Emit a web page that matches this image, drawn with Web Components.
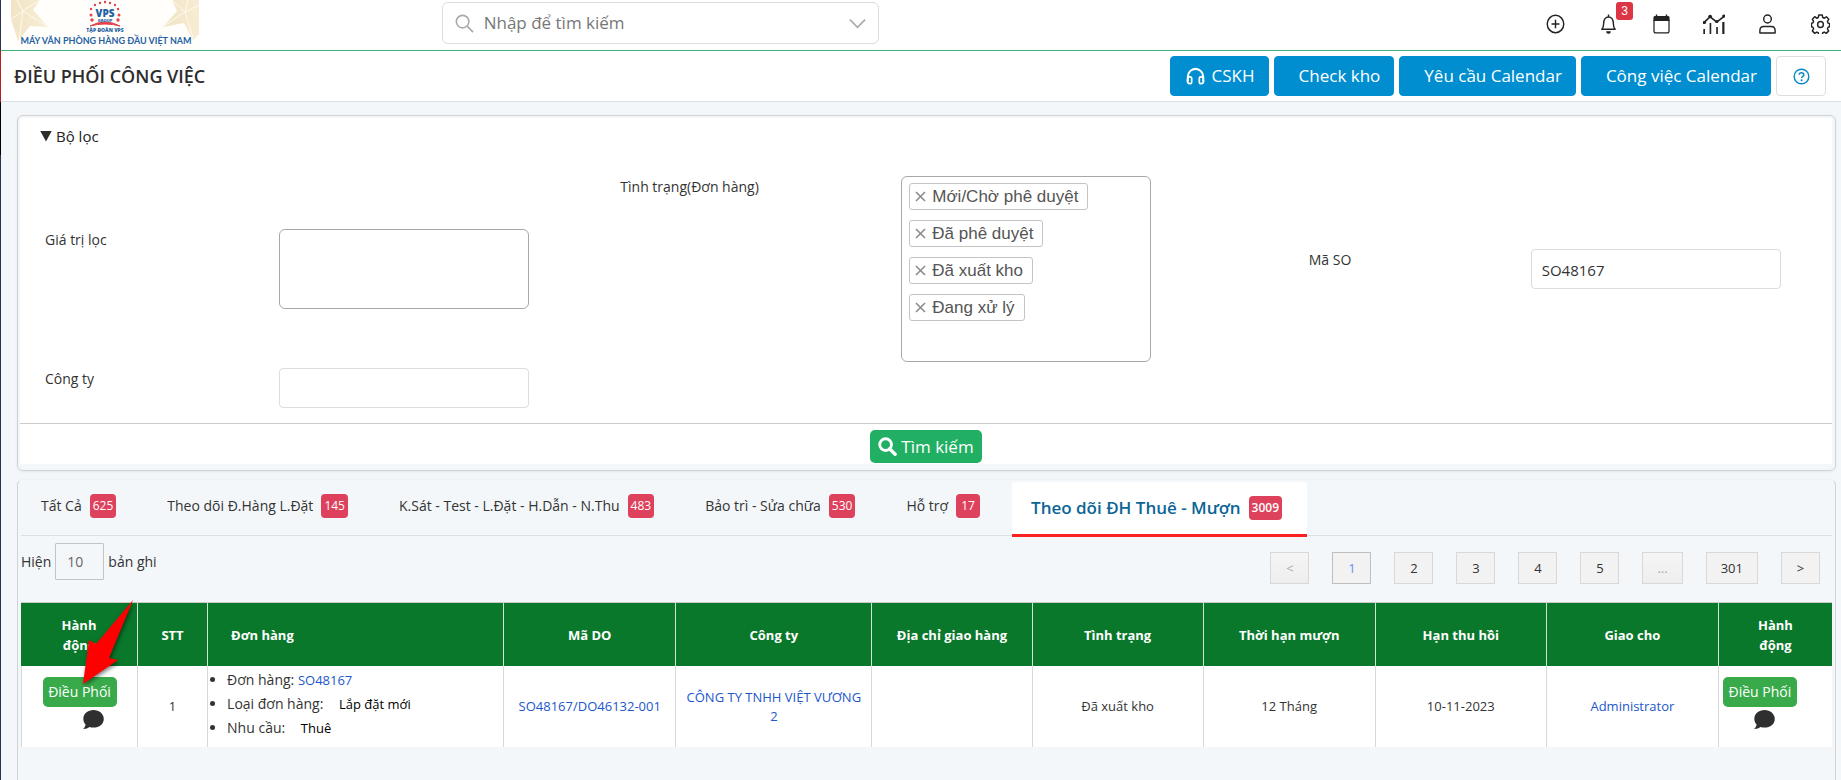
<!DOCTYPE html>
<html lang="vi">
<head>
<meta charset="utf-8">
<title>Điều phối công việc</title>
<style>
  html, body { margin: 0; }
  body { font-family: "Open Sans", "Noto Sans", sans-serif; font-size: 14px; line-height: 20px; color: #333; background: #f4f7fa; }
</style>
</head>
<body>
<app-shell>
  <top-bar slot="top"></top-bar>
  <page-title slot="title" heading="ĐIỀU PHỐI CÔNG VIỆC">
    <action-button icon="headphones">CSKH</action-button>
    <action-button>Check kho</action-button>
    <action-button>Yêu cầu Calendar</action-button>
    <action-button>Công việc Calendar</action-button>
    <action-button icon="help" plain label="Trợ giúp"></action-button>
  </page-title>
  <filter-panel></filter-panel>
  <result-panel>
    <tab-strip slot="tabs">
      <tab-item count="625">Tất Cả</tab-item>
      <tab-item count="145">Theo dõi Đ.Hàng L.Đặt</tab-item>
      <tab-item count="483">K.Sát - Test - L.Đặt - H.Dẫn - N.Thu</tab-item>
      <tab-item count="530">Bảo trì - Sửa chữa</tab-item>
      <tab-item count="17">Hỗ trợ</tab-item>
      <tab-item count="3009" active>Theo dõi ĐH Thuê - Mượn</tab-item>
    </tab-strip>
    <page-length slot="length"></page-length>
    <page-nav slot="nav"></page-nav>
    <order-table></order-table>
  </result-panel>
</app-shell>

<script>
const ICONS = {
  plus: '<circle cx="10" cy="10" r="8.7" fill="none" stroke="currentColor" stroke-width="1.5"/><path d="M10 5.8v8.4M5.8 10h8.4" stroke="currentColor" stroke-width="1.5"/>',
  bell: '<path d="M10 .6v2M3 15.3h14c-1.400-1.500-1.900-3-1.900-5.800 0-3.800-2-6.500-5.100-6.500s-5.100 2.700-5.100 6.500c0 2.800-.5 4.300-1.900 5.800z" fill="none" stroke="currentColor" stroke-width="1.500" stroke-linejoin="round"/><path d="M7.500 17.300h5a2.500 2.500 0 0 1-5 0z" fill="currentColor"/>',
  calendar: '<path d="M1.500 3.500q0-1.500 1.500-1.500h1V.5h1.500V2h9V.5H16V2h1q1.500 0 1.500 1.500V7h-17z" fill="currentColor"/><path d="M2.100 6v11q0 1.900 1.900 1.900h12q1.900 0 1.900-1.900V6" fill="none" stroke="currentColor" stroke-width="1.300"/>',
  chart: '<path d="M.5 9 6.500 2.800l6 5.200 7-6" fill="none" stroke="currentColor" stroke-width="1.600"/><g fill="currentColor"><circle cx="1.200" cy="8.500" r="1.600"/><circle cx="6.500" cy="2.500" r="1.700"/><circle cx="12.500" cy="7.500" r="1.600"/><circle cx="19" cy="2" r="1.600"/><path d="M.3 15h1.500v5H.3zM6 9h1.500v11H6zM12 13h1.500v7H12zM17.500 8h2v12h-2z"/></g>',
  user: '<circle cx="10" cy="5" r="4" fill="none" stroke="currentColor" stroke-width="1.500"/><path d="M2 19v-2.500q0-4 4-4h8q4 0 4 4V19z" fill="none" stroke="currentColor" stroke-width="1.500" stroke-linejoin="round"/>',
  gear: '<path d="M8.200 1h3.600l.6 2.500 1.600.7 2.200-1.400 2.500 2.500-1.400 2.200.7 1.600 1.500.4v3.200l-1.500.5-.7 1.600 1.300 2.100-2.500 2.500-2.100-1.300-1.600.7-.6 2.400H8.200l-.6-2.400-1.600-.7-2.100 1.300-2.500-2.500 1.300-2.100-.7-1.600-1.500-.4V9.300L2 8.900l.7-1.500L1.400 5.200l2.500-2.500L6 4.200l1.600-.7z" fill="none" stroke="currentColor" stroke-width="1.500" stroke-linejoin="round"/><circle cx="10" cy="10.500" r="3" fill="none" stroke="currentColor" stroke-width="1.500"/>',
  headphones: '<path d="M2 15V10a8 8 0 0 1 16 0v5" fill="none" stroke="currentColor" stroke-width="2.200"/><path d="M2 10.500h2.500q1.500 0 1.500 1.500v4q0 1.500-1.500 1.500H4q-2.500 0-2.500-3zM18 10.500h-2.500q-1.500 0-1.500 1.500v4q0 1.500 1.500 1.500h.5q2.500 0 2.500-3z" fill="none" stroke="currentColor" stroke-width="1.800"/>',
  help: '<circle cx="10" cy="10" r="8.600" fill="none" stroke="currentColor" stroke-width="1.700"/><path d="M7.300 8q0-2.500 2.700-2.500T12.700 8q0 1.300-1.400 2.100-1.100.6-1.100 1.800" fill="none" stroke="currentColor" stroke-width="1.800"/><circle cx="10.100" cy="14.300" r="1.200" fill="currentColor"/>',
  search: '<circle cx="8" cy="8" r="6.600" fill="none" stroke="currentColor" stroke-width="1.700"/><path d="M12.800 12.800 19 19" stroke="currentColor" stroke-width="1.800"/>',
  searchBold: '<circle cx="8" cy="8" r="6.200" fill="none" stroke="currentColor" stroke-width="3"/><path d="M12.300 12.500 18 18.200" stroke="currentColor" stroke-width="3.600" stroke-linecap="round"/>',
  chevron: '<path d="M2 6l8 8 8-8" fill="none" stroke="currentColor" stroke-width="1.800"/>',
  comment: '<path d="M10.500 1C5.300 1 1.200 4.500 1.200 9c0 2 .8 3.700 2.100 5.100-.3 1.600-1.100 2.900-2.300 4 2.300.1 4.300-.6 5.900-1.800 1.100.4 2.300.6 3.600.6 5.200 0 9.300-3.500 9.300-7.900S15.700 1 10.500 1z" fill="currentColor"/>'
};
const icon = (name, w, h = w) => `<svg class="icon" width="${w}" height="${h}" viewBox="0 0 20 20" preserveAspectRatio="none" aria-hidden="true">${ICONS[name]}</svg>`;

class Base extends HTMLElement {
  connectedCallback() {
    if (this.shadowRoot) return;
    this.attachShadow({ mode: 'open' }).innerHTML =
      `<style>*{box-sizing:border-box} .icon{display:block;flex:none} a{text-decoration:none} button,input,textarea{font:inherit;color:inherit;margin:0}</style>` + this.render();
  }
}

customElements.define('app-shell', class extends Base {
  render() { return `<style>
    :host{display:flex;flex-direction:column;min-height:100vh;padding-left:1px;box-sizing:border-box;
      background:linear-gradient(#26344f 0 50px,#b32024 50px 102px,#000 102px 155px,#26344f 155px) 0 0/1px 100% no-repeat #f4f7fa}
    main{flex:1;display:flex;flex-direction:column;gap:8px;padding:13px 5px 0 16px}
    ::slotted(result-panel){flex:1}
  </style><slot name="top"></slot><slot name="title"></slot><main><slot></slot></main>`; }
});

customElements.define('brand-logo', class extends Base {
  render() { return `<style>:host{display:block}svg{display:block}</style>
  <svg width="188" height="50" viewBox="0 0 188 50" role="img" aria-label="VPS Group">
    <defs><linearGradient id="g" x1="0" x2="1"><stop offset="0" stop-color="#f1e4c6"/><stop offset="1" stop-color="#f7edd4"/></linearGradient></defs>
    <rect width="188" height="46" fill="#fffefa"/>
    <path d="M0 0h29l-7 10 15 17-18-1-12 15-7-22z" fill="url(#g)"/>
    <path d="M12 11 0 19M12 11l17-11M12 11l25 16M12 11 8 40M12 11 6 0" stroke="#fffaf0" fill="none"/>
    <path d="M161 0h27v34l-6 6-9-17-21 4 14-16z" fill="url(#g)"/>
    <path d="M174 12 161 0M174 12l-21 14M174 12l8 26M174 12l14-7M174 12l3-12" stroke="#fffaf0" fill="none"/>
    <g fill="#e2434d"><circle cx="80" cy="15" r="1.500"/><circle cx="80" cy="9" r="1.200"/><circle cx="84" cy="5" r="1.200"/><circle cx="89" cy="3" r="1.200"/><circle cx="94" cy="2" r="1.200"/><circle cx="99" cy="3" r="1.200"/><circle cx="104" cy="5" r="1.200"/><circle cx="107" cy="9" r="1.200"/><circle cx="108" cy="15" r="1.500"/><circle cx="81" cy="20" r="1.700"/><circle cx="107" cy="20" r="1.700"/></g>
    <path d="M79 26q15-8 30 0-15-4-30 0z" fill="#e2434d" stroke="#e2434d"/>
    <g font-family="Open Sans, sans-serif" text-anchor="middle" fill="#1f62a4" font-weight="800">
      <text x="94" y="17" font-size="10">VPS</text>
      <text x="94" y="22" font-size="4">GROUP</text>
      <text x="94" y="32" font-size="5">TẬP ĐOÀN VPS</text>
      <text x="95" y="44" font-size="9" font-weight="700" font-family="Lato, sans-serif">MÁY VĂN PHÒNG HÀNG ĐẦU VIỆT NAM</text>
    </g>
  </svg>`; }
});

customElements.define('top-bar', class extends Base {
  render() {
    const names = [['plus','Thêm'],['bell','Thông báo'],['calendar','Lịch'],['chart','Báo cáo'],['user','Tài khoản'],['gear','Cài đặt']];
    return `<style>
    :host{display:block}
    header{display:grid;grid-template-columns:431fr 437px 963fr;height:51px;background:#fff;border-bottom:1px solid #3bb57c;padding-left:10px}
    .search{display:flex;align-items:center;height:42px;margin-top:2px;border:1px solid #ddd;border-radius:6px;padding:0 11px 0 12px;gap:10px;color:#aaa}
    input{flex:1;min-width:0;border:0;outline:0;padding:0;background:none;font-size:17px;line-height:24px;color:#777}
    input::placeholder{color:#777;opacity:1}
    nav{display:flex;justify-content:flex-end;gap:25px;padding:10px 7px 0 0}
    nav button{position:relative;width:28px;height:28px;padding:0;border:0;background:none;display:grid;place-items:center;color:#222}
    .badge{position:absolute;left:22px;top:-8px;width:17px;height:18px;border-radius:3px;background:#dc3545;color:#fff;font:12px/18px "Liberation Sans",sans-serif}
  </style><header><brand-logo></brand-logo>
    <div class="search">${icon('search',19)}<input type="text" placeholder="Nhập để tìm kiếm" aria-label="Tìm kiếm">${icon('chevron',19)}</div>
    <nav>${names.map(([n,l]) => `<button type="button" aria-label="${l}">${icon(n,n==='chart'?22:19,20)}${n==='bell'?'<span class="badge">3</span>':''}</button>`).join('')}</nav>
  </header>`; }
});

customElements.define('page-title', class extends Base {
  render() { return `<style>
    :host{display:flex;align-items:center;justify-content:space-between;height:51px;box-sizing:border-box;background:#fff;border-bottom:1px solid #dce0e4;padding:0 15px 0 13px}
    h1{margin:0;font-size:18px;line-height:24px;font-weight:600;color:#2d2d2d}
    div{display:flex;gap:5px}
  </style><h1>${this.getAttribute('heading')}</h1><div><slot></slot></div>`; }
});

customElements.define('action-button', class extends Base {
  render() { const plain = this.hasAttribute('plain'), i = this.getAttribute('icon'), l = this.getAttribute('label'); return `<style>
    :host{display:block}
    button{display:flex;align-items:center;gap:7px;height:40px;border:1px solid #008ed0;border-radius:4px;padding:0 13px 0 ${i ? 15 : 24}px;background:#008ed0;color:#fff;font-size:17px;line-height:24px;white-space:nowrap}
    button.plain{width:50px;padding:0;justify-content:center;background:#fff;border-color:#ddd;color:#0a8acb}
  </style><button type="button" class="${plain ? 'plain' : ''}" ${l ? `aria-label="${l}"` : ''}>${i ? icon(i, plain ? 17 : 19) : ''}${plain ? '' : '<slot></slot>'}</button>`; }
});

customElements.define('filter-field', class extends Base {
  render() {
    const kind = this.getAttribute('kind'), label = this.getAttribute('label'), v = this.getAttribute('value') || '';
    const control = kind === 'tags'
      ? `<div class="box tags" role="group" aria-labelledby="l"><slot></slot></div>`
      : kind === 'area' ? `<textarea id="c" class="box"></textarea>` : `<input id="c" type="text" value="${v}">`;
    return `<style>
    :host{display:grid;grid-template-columns:var(--label) 250px;align-items:start}
    label,.label{padding-top:1px}
    .box{display:block;width:250px;height:80px;border:1px solid #a8a8a8;border-radius:6px;background:#fff;resize:none}
    .tags{height:186px;padding:6px 7px;display:flex;flex-direction:column;align-items:flex-start;gap:10px}
    input{width:250px;height:40px;border:1px solid #ddd;border-radius:4px;padding:2px 10px 0;background:#fff;font-size:15px}
  </style>${kind === 'tags' ? `<span class="label" id="l">${label}</span>` : `<label for="c">${label}</label>`}${control}`; }
});

customElements.define('tag-chip', class extends Base {
  render() { return `<style>
    :host{display:flex;align-items:center;height:27px;box-sizing:border-box;border:1px solid #c4c4c4;border-radius:3px;padding:0 9px 0 5px;gap:6px;font:17px/24px "Liberation Sans",sans-serif;color:#555}
    button{border:0;background:none;padding:0;display:block;color:#888}
  </style><button type="button" aria-label="Xóa"><svg class="icon" width="11" height="11" viewBox="0 0 11 11"><path d="m1 1 9 9m0-9-9 9" stroke="currentColor" stroke-width="1.500"/></svg></button><span><slot></slot></span>`; }
});

customElements.define('filter-panel', class extends Base {
  render() { return `<style>
    :host{display:block;border:1px solid #d0d3d6;border-radius:6px;box-shadow:0 1px 3px #0001;padding:2px 3px 6px 2px}
    .body{background:#fff;border-bottom:1px solid #ccc;height:306px}
    details{padding:8px 0 0 20px}
    summary{list-style:none;display:flex;align-items:center;gap:4px;font-size:15px;line-height:20px;color:#222}
    summary::-webkit-details-marker{display:none}
    .tri{width:12px;height:11px;background:#2d2d2d;clip-path:polygon(0 0,100% 0,50% 100%)}
    .grid{display:grid;grid-template-columns:575fr 688fr 523fr;row-gap:6px;padding:30px 0 0 5px;align-items:center}
    .a{--label:234px}.b{--label:281px}.c{--label:222px}
    .foot{background:#fff;height:40px;display:flex;justify-content:center;padding:6px 0 0}
    .foot button{display:flex;align-items:center;gap:4px;height:33px;padding:0 8px;border:0;border-radius:5px;background:#21af63;color:#fff;font-size:17px;line-height:24px}
    </style>
    <div class="body"><details open><summary><span class="tri"></span>Bộ lọc</summary>
    <div class="grid">
      <filter-field class="a" kind="area" label="Giá trị lọc"></filter-field>
      <filter-field class="b" kind="tags" label="Tình trạng(Đơn hàng)"><tag-chip>Mới/Chờ phê duyệt</tag-chip><tag-chip>Đã phê duyệt</tag-chip><tag-chip>Đã xuất kho</tag-chip><tag-chip>Đang xử lý</tag-chip></filter-field>
      <filter-field class="c" kind="text" label="Mã SO" value="SO48167"></filter-field>
      <filter-field class="a" kind="text" label="Công ty"></filter-field>
    </div></details></div>
    <div class="foot"><button type="button">${icon('searchBold',19)}Tìm kiếm</button></div>`; }
});

customElements.define('result-panel', class extends Base {
  render() { return `<style>
    :host{display:block;border:1px solid #d0d3d6;border-top-color:#eef1f4;border-bottom:0;border-radius:6px 6px 0 0;padding:2px 3px 0 3px}
    .bar{display:flex;justify-content:space-between;align-items:flex-start;height:66px}
  </style><slot name="tabs"></slot><div class="bar"><slot name="length"></slot><slot name="nav"></slot></div><slot></slot>`; }
});

customElements.define('tab-strip', class extends Base {
  render() { return `<style>:host{display:block}nav{display:flex;height:54px;border-bottom:1px solid #dce0e4;padding-left:1px}</style><nav><slot></slot></nav>`; }
});

customElements.define('tab-item', class extends Base {
  render() { return `<style>
    :host{display:block}
    a{display:flex;align-items:center;gap:8px;height:48px;padding:0 32px 0 19px;color:inherit;white-space:nowrap}
    .count{display:block;min-width:24px;height:24px;border-radius:4px;padding:0 3px;background:#de415b;color:#fff;font-size:12px;line-height:24px;text-align:center}
    :host([active]) a{height:55px;background:#fff;border-bottom:3px solid #fb2121;border-radius:2px 2px 0 0;padding:0 25px 0 19px;color:#0b6596;font-size:17px;font-weight:600;position:relative}
    :host([active]) .count{font-weight:600}
  </style><a href="#"><slot></slot><span class="count">${this.getAttribute('count')}</span></a>`; }
});

customElements.define('page-length', class extends Base {
  render() { return `<style>
    :host{display:block;padding-top:7px}
    label{display:flex;align-items:center;gap:4px}
    input{width:49px;height:37px;border:1px solid #c4c4c4;border-radius:1px;padding:0 11px;background:transparent;color:#666}
  </style><label>Hiện <input type="text" value="10"> bản ghi</label>`; }
});

customElements.define('page-nav', class extends Base {
  render() { return `<style>
    :host{display:flex;gap:23px;padding:16px 12px 0 0}
    button{min-width:39px;height:32px;padding:0 14px;border:1px solid #d8d8d8;background:#f2f2f2;color:#333;font-size:13px;line-height:20px}
    button:disabled{color:#aaa;background:linear-gradient(#f5f5f5,#eee)}
    .cur{border-color:#bfbfbf;color:#6a8dfb}
  </style>${['&lt;','1','2','3','4','5','...','301','&gt;'].map(t => `<button type="button" class="${t==='1'?'cur':''}" ${t==='&lt;'||t==='...'?'disabled':''}>${t}</button>`).join('')}`; }
});

customElements.define('pointer-arrow', class extends Base {
  render() { return `<style>:host{position:absolute;left:61px;top:-4px;pointer-events:none}svg{display:block;filter:drop-shadow(1px 2px 2px #0008);overflow:visible}</style>
  <svg width="52" height="88" viewBox="0 0 52 88" aria-hidden="true"><path d="M51 2 27 60l9 2L1 86 7 42l7 4z" fill="#f00"/></svg>`; }
});

customElements.define('row-action', class extends Base {
  render() { return `<style>
    :host{display:flex;flex-direction:column;align-items:var(--align,center);gap:2px}
    button{width:74px;height:30px;border:0;border-radius:5px;padding:0;background:#38aa4a;color:#fff;font-size:14px;line-height:20px;white-space:nowrap}
    a{display:block;color:#2f2f2f;padding-left:var(--indent,26px)}
  </style><button type="button">Điều Phối</button><a href="#" aria-label="Bình luận">${icon('comment',22)}</a>`; }
});

customElements.define('order-table', class extends Base {
  render() {
    const w = [117,70,296,172,196,160,171,172,171,172,113];
    const heads = ['Hành<br>động','STT','Đơn hàng','Mã DO','Công ty','Địa chỉ giao hàng','Tình trạng','Thời hạn mượn','Hạn thu hồi','Giao cho','Hành<br>động'];
    return `<style>
    :host{display:block;position:relative}
    table{width:100%;table-layout:fixed;border-collapse:separate;border-spacing:0;border-top:1px solid #ccc}
    th{height:63px;padding:0 4px;background:#09782b;color:#fff;font-weight:700;font-size:13px;line-height:20px;border-right:1px solid #cfe3d5}
    th:nth-child(3){text-align:left;padding-left:23px}
    td{height:81px;padding:0 7px;background:#fff;text-align:center;vertical-align:middle;font-size:13px;line-height:19px;border-right:1px solid #d8d8d8}
    td:first-child{border-left:1px solid #d8d8d8}
    th:last-child,td:last-child{border-right:0}
    td:first-child,td:last-child{vertical-align:top;padding-top:11px}
    td:last-child{--align:flex-start;--indent:30px;padding-left:4px}
    td:nth-child(3){text-align:left;vertical-align:top;padding:3px 0 0}
    td a{color:#2257cc}
    ul{margin:0;padding:0 0 0 19px;font-size:14px;line-height:22px}
    li{padding-bottom:2px}
    li span{color:#000;font-size:13px;padding-left:12px}
    li a{font-size:13px}
  </style><table><colgroup>${w.map(x => `<col style="width:${(x / 18.10).toFixed(2)}%">`).join('')}</colgroup>
  <thead><tr>${heads.map(h => `<th scope="col">${h}</th>`).join('')}</tr></thead>
  <tbody><tr><td><row-action></row-action></td><td>1</td>
  <td><ul><li>Đơn hàng: <a href="#">SO48167</a></li><li>Loại đơn hàng: <span>Lắp đặt mới</span></li><li>Nhu cầu: <span>Thuê</span></li></ul></td>
  <td><a href="#">SO48167/DO46132-001</a></td><td><a href="#">CÔNG TY TNHH VIỆT VƯƠNG 2</a></td><td></td><td>Đã xuất kho</td><td>12 Tháng</td><td>10-11-2023</td><td><a href="#">Administrator</a></td><td><row-action></row-action></td></tr></tbody></table>
  <pointer-arrow></pointer-arrow>`; }
});
</script>
</body>
</html>
